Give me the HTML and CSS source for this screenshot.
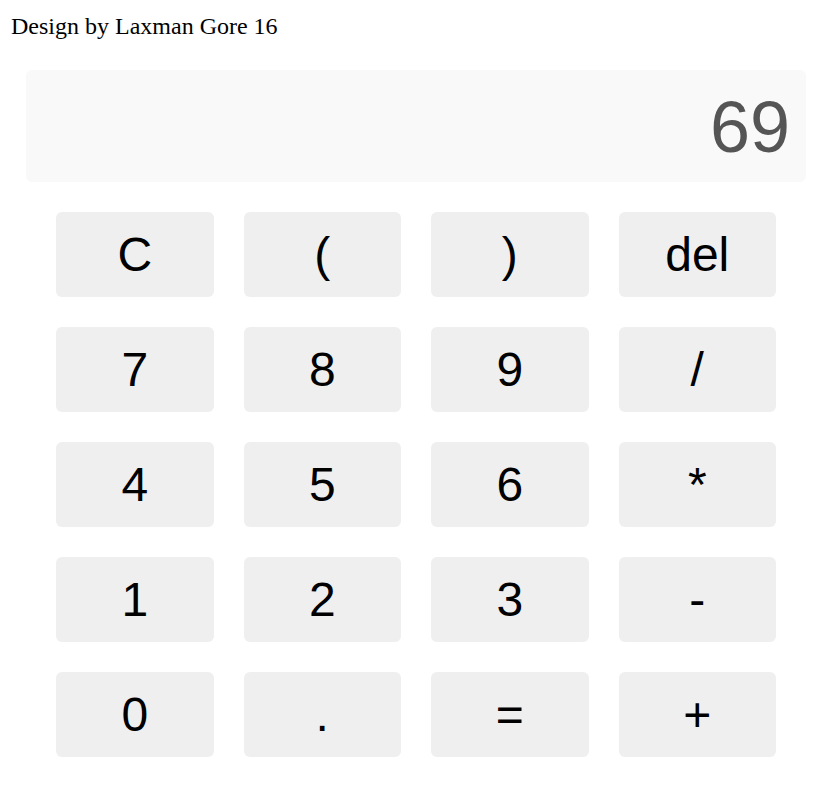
FILE: index.html
```html
<!DOCTYPE html>
<html>
<head>
<meta charset="utf-8">
<title>Calculator</title>
<link rel="stylesheet" href="styles.css">
</head>
<body>
<div class="title">Design by Laxman Gore 16</div>
<div class="calc">
  <div class="display">69</div>
  <div class="keys">
    <button class="key">C</button>
    <button class="key">(</button>
    <button class="key">)</button>
    <button class="key">del</button>
    <button class="key">7</button>
    <button class="key">8</button>
    <button class="key">9</button>
    <button class="key">/</button>
    <button class="key">4</button>
    <button class="key">5</button>
    <button class="key">6</button>
    <button class="key">*</button>
    <button class="key">1</button>
    <button class="key">2</button>
    <button class="key">3</button>
    <button class="key">-</button>
    <button class="key">0</button>
    <button class="key">.</button>
    <button class="key">=</button>
    <button class="key">+</button>
  </div>
</div>
</body>
</html>
```
FILE: styles.css
```css
* { box-sizing: border-box; }
html, body { margin: 0; padding: 0; background: #fff; }
.title {
  font-family: "Liberation Serif", "Times New Roman", serif;
  font-size: 24px;
  color: #000;
  height: 70px;
  padding: 13px 0 0 11px;
}
.calc {
  padding: 0 26px;
}
.display {
  background: #f9f9f9;
  border-radius: 6px;
  height: 112px;
  padding: 16px 16px 0 16px;
  text-align: right;
  font-family: "Liberation Sans", Arial, sans-serif;
  font-size: 72px;
  color: #555;
}
.keys {
  margin: 30px 30px 0 30px;
  display: grid;
  grid-template-columns: repeat(4, 1fr);
  grid-auto-rows: 85px;
  gap: 30px;
}
.key {
  border: none;
  border-radius: 6px;
  background: #efefef;
  font-family: "Liberation Sans", Arial, sans-serif;
  font-size: 48px;
  color: #000;
  padding: 0;
  margin: 0;
}
```
